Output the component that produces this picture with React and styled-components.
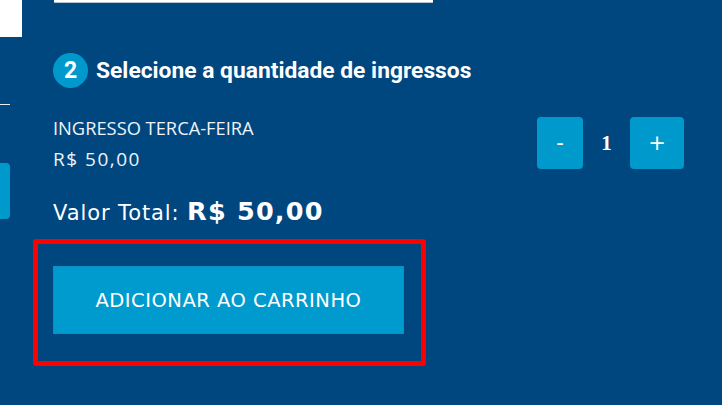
import React, { useState } from "react";
import styled, { createGlobalStyle } from "styled-components";

const GlobalStyle = createGlobalStyle`
  html, body {
    margin: 0;
    padding: 0;
    background: #00467f;
    overflow: hidden;
  }
`;

const TicketStep = () => {
  const [qty, setQty] = useState(1);
  const price = 50;
  const fmt = (v) => "R$ " + v.toFixed(2).replace(".", ",");

  return (
    <Page>
      <GlobalStyle />
      <LeftRail>
        <WhiteBlock />
        <Divider />
        <SideTab />
      </LeftRail>
      <Content>
        <InputEdge />
        <StepTitle>
          <StepNumber>2</StepNumber>
          <span>Selecione a quantidade de ingressos</span>
        </StepTitle>
        <TicketRow>
          <TicketInfo>
            <TicketName>INGRESSO TERCA-FEIRA</TicketName>
            <TicketPrice>{fmt(price)}</TicketPrice>
          </TicketInfo>
          <Qty>
            <QtyButton $w={46} onClick={() => setQty(Math.max(1, qty - 1))}>-</QtyButton>
            <QtyValue>{qty}</QtyValue>
            <QtyButton $w={54} onClick={() => setQty(qty + 1)}>+</QtyButton>
          </Qty>
        </TicketRow>
        <Total>
          Valor Total: <strong>{fmt(price * qty)}</strong>
        </Total>
        <Highlight>
          <CartButton>ADICIONAR AO CARRINHO</CartButton>
        </Highlight>
      </Content>
    </Page>
  );
};

const Page = styled.div`
  display: grid;
  grid-template-columns: 22px 1fr;
  column-gap: 31px;
  width: 722px;
  height: 405px;
  background: #00467f;
  color: #fff;
`;

const LeftRail = styled.div`
  display: flex;
  flex-direction: column;
  align-items: flex-start;
`;

const WhiteBlock = styled.div`
  width: 22px;
  height: 37px;
  background: #fff;
`;

const Divider = styled.div`
  width: 10px;
  height: 1px;
  margin-top: 67px;
  background: #e8eef5;
`;

const SideTab = styled.div`
  width: 10px;
  height: 56px;
  margin-top: 58px;
  background: #0099cc;
  border-radius: 0 4px 4px 0;
`;

const Content = styled.div`
  display: flex;
  flex-direction: column;
  align-items: flex-start;
`;

const InputEdge = styled.div`
  width: 379px;
  height: 2px;
  background: #fff;
  border-bottom: 1px solid #b9c3cf;
  margin-left: 1px;
`;

const StepTitle = styled.h2`
  display: flex;
  align-items: center;
  gap: 8px;
  height: 34px;
  margin: 50px 0 0;
  font-family: Roboto, "Open Sans", sans-serif;
  font-weight: 700;
  font-size: 22.8px;
  color: #fff;
`;

const StepNumber = styled.span`
  display: flex;
  align-items: center;
  justify-content: center;
  width: 35px;
  height: 35px;
  border-radius: 50%;
  background: #0099cc;
  font-size: 23px;
`;

const TicketRow = styled.div`
  display: flex;
  justify-content: space-between;
  align-items: flex-start;
  width: 631px;
  margin-top: 30px;
`;

const TicketInfo = styled.div`
  display: flex;
  flex-direction: column;
  font-family: "Open Sans", sans-serif;
  font-weight: 500;
  color: #eef3f8;
`;

const TicketName = styled.div`
  font-size: 18.3px;
  line-height: 22px;
`;

const TicketPrice = styled.div`
  font-size: 19px;
  letter-spacing: 1.5px;
  line-height: 22px;
  margin-top: 9px;
`;

const Qty = styled.div`
  display: flex;
  align-items: center;
`;

const QtyButton = styled.button`
  width: ${(p) => p.$w}px;
  height: 52px;
  border: none;
  border-radius: 4px;
  background: #0099cc;
  color: #fff;
  font-family: "DejaVu Sans", sans-serif;
  font-size: 21px;
  cursor: pointer;
  padding: 0;
`;

const QtyValue = styled.span`
  width: 47px;
  text-align: center;
  font-family: "Liberation Serif", serif;
  font-weight: 700;
  font-size: 21px;
`;

const Total = styled.div`
  margin-top: 26px;
  font-family: "DejaVu Sans", sans-serif;
  font-size: 21px;
  letter-spacing: 0.9px;
  line-height: 30px;
  strong {
    font-size: 25.5px;
    letter-spacing: 1.2px;
  }
`;

const Highlight = styled.div`
  margin: 11px 0 0 -20px;
  padding: 22px 17px 27px 15px;
  border: 5px solid #ff0000;
  border-radius: 3px;
`;

const CartButton = styled.button`
  display: block;
  width: 351px;
  height: 68px;
  border: 1px solid #0a8fc0;
  background: #009bce;
  color: #fff;
  font-family: "DejaVu Sans", sans-serif;
  font-size: 19.5px;
  letter-spacing: 0.5px;
  cursor: pointer;
`;

export default function App() {
  return <TicketStep />;
}
